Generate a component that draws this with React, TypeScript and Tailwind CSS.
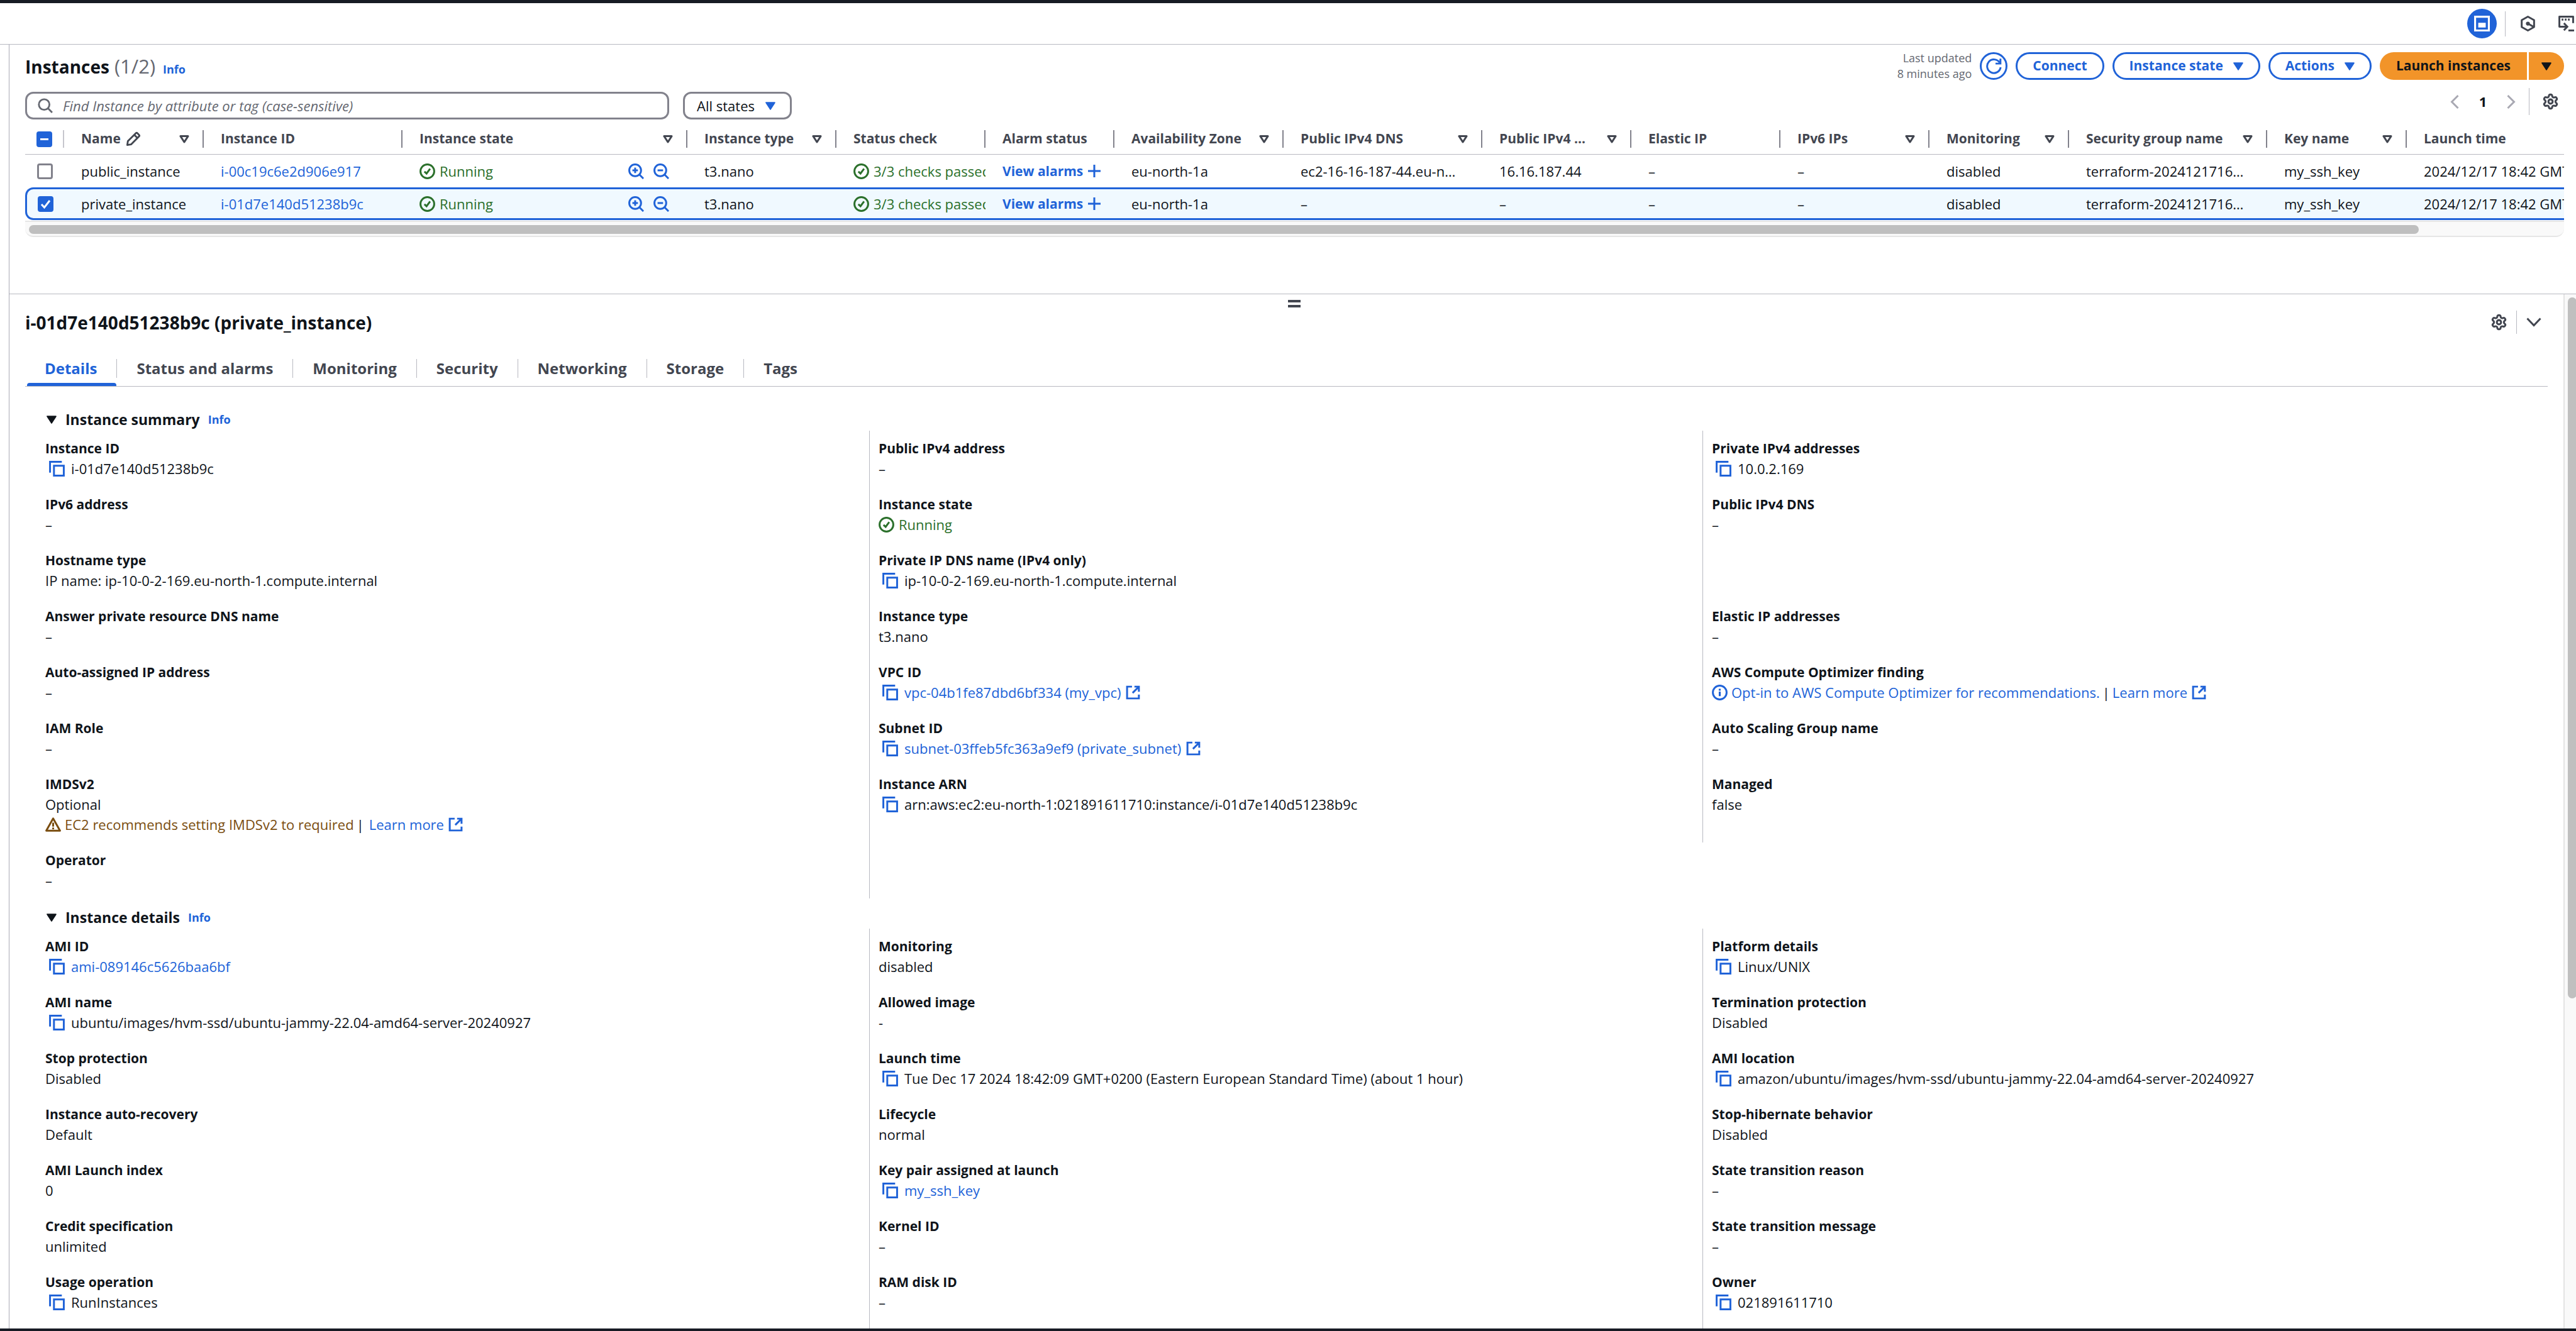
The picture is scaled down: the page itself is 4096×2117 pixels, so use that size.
import type { ReactNode } from "react";
import { Settings } from "lucide-react";

/* ---------- icons ---------- */

function Caret({ className = "" }: { className?: string }) {
  return (
    <svg viewBox="0 0 16 13" className={`h-[13px] w-4 shrink-0 ${className}`} aria-hidden="true">
      <path d="M1.2 1.2h13.6L8 11.8z" fill="currentColor" stroke="currentColor" strokeWidth="2" strokeLinejoin="round" />
    </svg>
  );
}

function FilterIcon() {
  return (
    <svg viewBox="0 0 16 13" className="h-[13px] w-4 shrink-0 text-[#424650]" fill="none" aria-hidden="true">
      <path d="M2 1.6h12L8 11z" stroke="currentColor" strokeWidth="3" strokeLinejoin="round" />
    </svg>
  );
}

function Icon({ children, className = "size-[25px]" }: { children: ReactNode; className?: string }) {
  return (
    <svg
      viewBox="0 0 16 16"
      fill="none"
      stroke="currentColor"
      strokeWidth="1.9"
      className={`shrink-0 ${className}`}
      aria-hidden="true"
    >
      {children}
    </svg>
  );
}

const CheckCircle = () => (
  <Icon>
    <circle cx="8" cy="8" r="7" />
    <path d="M5 8.2l2.2 2L10.8 5.4" />
  </Icon>
);

const InfoCircle = () => (
  <Icon>
    <circle cx="8" cy="8" r="7" />
    <path d="M8 7v4.6M8 4.2v1.9" strokeWidth="2" />
  </Icon>
);

const Warning = () => (
  <Icon>
    <path d="M8 1.8L15 14.2H1z" strokeLinejoin="round" />
    <path d="M8 6v4M8 11v1.8" />
  </Icon>
);

const CopyIcon = () => (
  <Icon>
    <path d="M13 1H1v11" />
    <path d="M5 5h10v10H5z" />
  </Icon>
);

const External = () => (
  <Icon>
    <path d="M7 2H2v12h12V10" />
    <path d="M9.5 2H14v5.2M13.8 2.2L7.6 8.4" />
  </Icon>
);

const SearchIcon = () => (
  <Icon className="size-6">
    <circle cx="6.8" cy="6.8" r="5.6" />
    <path d="M11 11l4.3 4.3" />
  </Icon>
);

const ZoomIcon = ({ plus }: { plus?: boolean }) => (
  <Icon>
    <circle cx="7" cy="7" r="6" />
    <path d="M11.4 11.4l4 4" />
    <path d="M4.2 7h5.6" />
    {plus && <path d="M7 4.2v5.6" />}
  </Icon>
);

const PlusIcon = () => (
  <Icon className="size-5">
    <path d="M8 0v16M0 8h16" strokeWidth="2.4" />
  </Icon>
);

const Pencil = () => (
  <Icon className="size-6">
    <path
      d="M1.6 14.4l.6-4L10.6 2a1.3 1.3 0 0 1 1.8 0L14 3.6a1.3 1.3 0 0 1 0 1.8L5.6 13.8zM9 3.6L12.4 7"
      strokeLinejoin="round"
    />
  </Icon>
);

const Refresh = () => (
  <Icon>
    <path d="M14.8 9A6.9 6.9 0 1 1 13.8 4.2" />
    <path d="M14.6 .2V5.2H9.6" />
  </Icon>
);

const SplitPanelIcon = () => (
  <Icon>
    <path d="M1 1h14v14H1z" strokeWidth="2" />
    <path d="M4.2 7.2h7.6v4.8H4.2z" fill="currentColor" stroke="none" />
  </Icon>
);

const HexagonIcon = () => (
  <Icon>
    <path d="M8 1l6.3 3.5v7L8 15l-6.3-3.5v-7z" strokeLinejoin="round" />
    <circle cx="8" cy="8" r="2" fill="currentColor" stroke="none" />
    <path d="M8 8l5.8 3.3" />
  </Icon>
);

const ShellIcon = () => (
  <Icon>
    <path d="M4.5 11.2H1V1h14v6.5" strokeLinejoin="round" />
    <path d="M3.3 3.9h1.8M6.5 3.9h1.8M9.7 3.9h1.8" strokeWidth="2" />
    <path d="M4 11.2h4.8M5.6 7.6l3.5 3.6-3.5 3.6" />
    <path d="M10.2 15h5.8" />
  </Icon>
);

const Gear = () => <Settings className="size-[27px] text-[#424650]" strokeWidth={2.7} aria-hidden="true" />;

/* ---------- small parts ---------- */

const Link = ({ children }: { children: ReactNode }) => (
  <a href="#" className="text-[#2063d8]">
    {children}
  </a>
);

const InfoLink = () => (
  <a href="#" className="text-[18px] font-bold text-[#2063d8]">
    Info
  </a>
);

const Running = () => (
  <span className="flex items-center gap-[7px] text-[#2b702b]">
    <CheckCircle />
    Running
  </span>
);

function Copyable({ children, external }: { children: ReactNode; external?: boolean }) {
  return (
    <span className="flex items-center pl-[6px]">
      <button type="button" aria-label="Copy" className="mr-[10px] text-[#2063d8]">
        <CopyIcon />
      </button>
      {children}
      {external && (
        <span className="ml-[7px] text-[#2063d8]">
          <External />
        </span>
      )}
    </span>
  );
}

function OutlineButton({ children, menu }: { children: ReactNode; menu?: boolean }) {
  return (
    <button
      type="button"
      className="flex h-[44px] items-center gap-4 rounded-full border-[3px] border-[#2063d8] px-6 text-[21px] font-bold text-[#2063d8]"
    >
      {children}
      {menu && <Caret />}
    </button>
  );
}

/* ---------- instances table ---------- */

type Column = { title: string; width: string; filter?: boolean; edit?: boolean };

const columns: Column[] = [
  { title: "Name", width: "w-[222px]", filter: true, edit: true },
  { title: "Instance ID", width: "w-[316px]" },
  { title: "Instance state", width: "w-[453px]", filter: true },
  { title: "Instance type", width: "w-[237px]", filter: true },
  { title: "Status check", width: "w-[237px]" },
  { title: "Alarm status", width: "w-[205px]" },
  { title: "Availability Zone", width: "w-[269px]", filter: true },
  { title: "Public IPv4 DNS", width: "w-[316px]", filter: true },
  { title: "Public IPv4 …", width: "w-[237px]", filter: true },
  { title: "Elastic IP", width: "w-[237px]" },
  { title: "IPv6 IPs", width: "w-[237px]", filter: true },
  { title: "Monitoring", width: "w-[222px]", filter: true },
  { title: "Security group name", width: "w-[315px]", filter: true },
  { title: "Key name", width: "w-[222px]", filter: true },
  { title: "Launch time", width: "w-[316px]" },
];

const instances = [
  { name: "public_instance", id: "i-00c19c6e2d906e917", dns: "ec2-16-16-187-44.eu-n…", ip: "16.16.187.44", selected: false },
  { name: "private_instance", id: "i-01d7e140d51238b9c", dns: "–", ip: "–", selected: true },
];

function RowCheckbox({ label, checked }: { label: string; checked: boolean }) {
  return (
    <span className="relative mx-auto block size-[25px]">
      <input
        type="checkbox"
        aria-label={label}
        defaultChecked={checked}
        className="block size-[25px] appearance-none rounded-[4px] border-[3px] border-[#82828c] bg-white checked:border-[#2063d8] checked:bg-[#2063d8]"
      />
      {checked && (
        <svg viewBox="0 0 25 25" className="pointer-events-none absolute inset-0 size-[25px]" fill="none" aria-hidden="true">
          <path d="M6 13l4.5 5L19 7" stroke="white" strokeWidth="3" />
        </svg>
      )}
    </span>
  );
}

function InstancesTable() {
  return (
    <div className="mt-[7px] overflow-hidden">
      <table className="w-[4103px] table-fixed border-separate border-spacing-0 text-left">
        <colgroup>
          <col className="w-[62px]" />
          {columns.map((c) => (
            <col key={c.title} className={c.width} />
          ))}
        </colgroup>
        <thead>
          <tr className="h-[49px]">
            <th className="border-b border-[#b8b9c1] p-0">
              <div className="flex h-7 items-center border-r-2 border-[#c6c6cd]">
                <span className="relative mx-auto block size-[25px]">
                  <input
                    type="checkbox"
                    aria-label="Select all instances"
                    className="block size-[25px] appearance-none rounded-[4px] bg-[#2063d8]"
                  />
                  <span className="pointer-events-none absolute top-[11px] left-[6px] h-[3px] w-[13px] bg-white" />
                </span>
              </div>
            </th>
            {columns.map((c, i) => (
              <th key={c.title} className="border-b border-[#b8b9c1] p-0">
                <div
                  className={`flex h-7 items-center justify-between pr-[21px] pl-[27px] text-[21px] font-bold text-[#424650] ${
                    i < columns.length - 1 ? "border-r-2 border-[#82828c]" : ""
                  }`}
                >
                  <span className="flex items-center gap-2 whitespace-nowrap">
                    {c.title}
                    {c.edit && <Pencil />}
                  </span>
                  {c.filter && <FilterIcon />}
                </div>
              </th>
            ))}
          </tr>
        </thead>
        <tbody>
          {instances.map((r) => {
            const edge = r.selected ? "border-y-[3px] border-[#2063d8] bg-[#f0f9ff]" : "";
            const cell = `overflow-hidden whitespace-nowrap p-0 pl-[27px] ${edge}`;
            return (
              <tr key={r.id} className="h-[52px] text-[22px]">
                <td className={`p-0 ${edge} ${r.selected ? "rounded-l-[13px] border-l-[3px]" : ""}`}>
                  <RowCheckbox label={`Select ${r.name}`} checked={r.selected} />
                </td>
                <td className={cell}>{r.name}</td>
                <td className={cell}>
                  <Link>{r.id}</Link>
                </td>
                <td className={cell}>
                  <div className="flex items-center justify-between pr-[29px]">
                    <Running />
                    <span className="flex gap-[15px] text-[#2063d8]">
                      <button type="button" aria-label="Filter by this value">
                        <ZoomIcon plus />
                      </button>
                      <button type="button" aria-label="Exclude this value">
                        <ZoomIcon />
                      </button>
                    </span>
                  </div>
                </td>
                <td className={cell}>t3.nano</td>
                <td className={cell}>
                  <span className="flex items-center gap-[7px] text-[#2b702b]">
                    <CheckCircle />
                    3/3 checks passed
                  </span>
                </td>
                <td className={cell}>
                  <a href="#" className="flex items-center gap-2 text-[21px] leading-[33px] font-bold text-[#2063d8]">
                    View alarms
                    <PlusIcon />
                  </a>
                </td>
                <td className={cell}>eu-north-1a</td>
                <td className={cell}>{r.dns}</td>
                <td className={cell}>{r.ip}</td>
                <td className={cell}>–</td>
                <td className={cell}>–</td>
                <td className={cell}>disabled</td>
                <td className={cell}>terraform-2024121716…</td>
                <td className={cell}>my_ssh_key</td>
                <td className={cell}>2024/12/17 18:42 GMT+2</td>
              </tr>
            );
          })}
        </tbody>
      </table>
      <div className="mt-px h-[26px] rounded-b-[13px] border-y-2 border-[#e6e6e6] bg-[#f9f9f9] px-[6px] pt-[5px]">
        <div className="h-[14px] w-[94.4%] rounded-full bg-[#bfbfbf]" />
      </div>
    </div>
  );
}

/* ---------- detail panel ---------- */

type Field = { label: string; value: ReactNode } | null;

const dash = "–";

const summary: Field[] = [
  { label: "Instance ID", value: <Copyable>i-01d7e140d51238b9c</Copyable> },
  { label: "Public IPv4 address", value: dash },
  { label: "Private IPv4 addresses", value: <Copyable>10.0.2.169</Copyable> },
  { label: "IPv6 address", value: dash },
  { label: "Instance state", value: <Running /> },
  { label: "Public IPv4 DNS", value: dash },
  { label: "Hostname type", value: "IP name: ip-10-0-2-169.eu-north-1.compute.internal" },
  { label: "Private IP DNS name (IPv4 only)", value: <Copyable>ip-10-0-2-169.eu-north-1.compute.internal</Copyable> },
  null,
  { label: "Answer private resource DNS name", value: dash },
  { label: "Instance type", value: "t3.nano" },
  { label: "Elastic IP addresses", value: dash },
  { label: "Auto-assigned IP address", value: dash },
  {
    label: "VPC ID",
    value: (
      <Copyable external>
        <Link>vpc-04b1fe87dbd6bf334 (my_vpc)</Link>
      </Copyable>
    ),
  },
  {
    label: "AWS Compute Optimizer finding",
    value: (
      <span className="flex items-center text-[#2063d8]">
        <InfoCircle />
        <a href="#" className="ml-[6px]">
          Opt-in to AWS Compute Optimizer for recommendations.
        </a>
        <span className="mx-1 text-[#0f141a]">|</span>
        <a href="#" className="flex items-center gap-[6px]">
          Learn more
          <External />
        </a>
      </span>
    ),
  },
  { label: "IAM Role", value: dash },
  {
    label: "Subnet ID",
    value: (
      <Copyable external>
        <Link>subnet-03ffeb5fc363a9ef9 (private_subnet)</Link>
      </Copyable>
    ),
  },
  { label: "Auto Scaling Group name", value: dash },
  {
    label: "IMDSv2",
    value: (
      <>
        Optional
        <span className="flex items-center text-[#7a4d10]">
          <Warning />
          <span className="ml-[6px]">EC2 recommends setting IMDSv2 to required</span>
          <span className="mr-2 ml-1 text-[#0f141a]">|</span>
          <a href="#" className="flex items-center gap-[6px] text-[#2063d8]">
            Learn more
            <External />
          </a>
        </span>
      </>
    ),
  },
  { label: "Instance ARN", value: <Copyable>arn:aws:ec2:eu-north-1:021891611710:instance/i-01d7e140d51238b9c</Copyable> },
  { label: "Managed", value: "false" },
  { label: "Operator", value: dash },
];

const details: Field[] = [
  {
    label: "AMI ID",
    value: (
      <Copyable>
        <Link>ami-089146c5626baa6bf</Link>
      </Copyable>
    ),
  },
  { label: "Monitoring", value: "disabled" },
  { label: "Platform details", value: <Copyable>Linux/UNIX</Copyable> },
  { label: "AMI name", value: <Copyable>ubuntu/images/hvm-ssd/ubuntu-jammy-22.04-amd64-server-20240927</Copyable> },
  { label: "Allowed image", value: "-" },
  { label: "Termination protection", value: "Disabled" },
  { label: "Stop protection", value: "Disabled" },
  {
    label: "Launch time",
    value: <Copyable>Tue Dec 17 2024 18:42:09 GMT+0200 (Eastern European Standard Time) (about 1 hour)</Copyable>,
  },
  { label: "AMI location", value: <Copyable>amazon/ubuntu/images/hvm-ssd/ubuntu-jammy-22.04-amd64-server-20240927</Copyable> },
  { label: "Instance auto-recovery", value: "Default" },
  { label: "Lifecycle", value: "normal" },
  { label: "Stop-hibernate behavior", value: "Disabled" },
  { label: "AMI Launch index", value: "0" },
  {
    label: "Key pair assigned at launch",
    value: (
      <Copyable>
        <Link>my_ssh_key</Link>
      </Copyable>
    ),
  },
  { label: "State transition reason", value: dash },
  { label: "Credit specification", value: "unlimited" },
  { label: "Kernel ID", value: dash },
  { label: "State transition message", value: dash },
  { label: "Usage operation", value: <Copyable>RunInstances</Copyable> },
  { label: "RAM disk ID", value: dash },
  { label: "Owner", value: <Copyable>021891611710</Copyable> },
  null,
  null,
  null,
];

function Section({ title, fields, first }: { title: string; fields: Field[]; first?: boolean }) {
  return (
    <section className={`px-[18px] ${first ? "pt-[34px]" : "pt-3"}`}>
      <div className="flex h-9 items-center pl-4">
        <h3 className="flex items-baseline gap-[13px]">
          <button type="button" className="flex items-center gap-[14px] text-[23px] font-bold">
            <Caret />
            {title}
          </button>
          <InfoLink />
        </h3>
      </div>
      <dl className="grid grid-cols-3 text-[22px] leading-8">
        {fields.map((f, i) => (
          <div
            key={i}
            className={`pt-3 pb-[13px] pl-[14px] whitespace-nowrap ${i % 3 < 2 ? "border-r border-[#b8b9c1]" : ""}`}
          >
            {f && (
              <>
                <dt className="text-[21px] font-bold">{f.label}</dt>
                <dd>{f.value}</dd>
              </>
            )}
          </div>
        ))}
      </dl>
    </section>
  );
}

const tabs = ["Details", "Status and alarms", "Monitoring", "Security", "Networking", "Storage", "Tags"];

export default function App() {
  return (
    <div className="flex h-screen flex-col overflow-hidden border-t-[5px] border-b-4 border-[#171b24] bg-white font-['Open_Sans','Noto_Sans',sans-serif] text-[#0f141a]">
      <header className="flex h-[66px] shrink-0 items-center justify-end border-b border-[#b8b9c1] pr-[3px]">
        <button
          type="button"
          aria-label="Split panel"
          className="flex size-[47px] items-center justify-center rounded-full bg-[#2063d8] text-white"
        >
          <SplitPanelIcon />
        </button>
        <span className="ml-[13px] h-10 w-px bg-[#b8b9c1]" />
        <button type="button" aria-label="Amazon Q" className="ml-[23px] text-[#424650]">
          <HexagonIcon />
        </button>
        <button type="button" aria-label="CloudShell" className="ml-[36px] text-[#424650]">
          <ShellIcon />
        </button>
      </header>

      <main className="ml-[14px] flex min-h-0 flex-1 flex-col border-l border-[#a9a9b5]">
        <section className="shrink-0 pt-3 pr-[19px] pb-[90px] pl-[25px]">
          <div className="flex h-[44px] items-center justify-between">
            <h1 className="flex items-baseline text-[28px] font-bold">
              Instances
              <span className="mr-3 ml-2 text-[31px] font-normal text-[#656871]">(1/2)</span>
              <InfoLink />
            </h1>
            <div className="flex items-center gap-[13px]">
              <p className="text-right text-[18px] leading-[25px] text-[#656871]">
                Last updated
                <br />8 minutes ago
              </p>
              <button
                type="button"
                aria-label="Refresh"
                className="flex size-[44px] items-center justify-center rounded-full border-[3px] border-[#2063d8] text-[#2063d8]"
              >
                <Refresh />
              </button>
              <OutlineButton>Connect</OutlineButton>
              <OutlineButton menu>Instance state</OutlineButton>
              <OutlineButton menu>Actions</OutlineButton>
              <div className="flex h-[44px] gap-[3px] text-[21px] font-bold">
                <button type="button" className="rounded-l-full bg-[#f29429] px-[26px]">
                  Launch instances
                </button>
                <button
                  type="button"
                  aria-label="More launch options"
                  className="flex w-[56px] items-center justify-center rounded-r-full bg-[#f29429]"
                >
                  <Caret />
                </button>
              </div>
            </div>
          </div>

          <div className="mt-[13px] flex items-start justify-between">
            <div className="mt-[6px] flex gap-[22px]">
              <label className="flex h-[44px] w-[1024px] items-center gap-4 rounded-[13px] border-[3px] border-[#82828c] pl-[17px] text-[#656871]">
                <SearchIcon />
                <input
                  type="search"
                  aria-label="Find instances"
                  placeholder="Find Instance by attribute or tag (case-sensitive)"
                  className="flex-1 text-[22px] outline-none placeholder:text-[#656871] placeholder:italic"
                />
              </label>
              <div className="relative">
                <select
                  aria-label="Instance state filter"
                  className="h-[44px] w-[173px] appearance-none rounded-[13px] border-[3px] border-[#82828c] pl-[19px] text-[22px]"
                >
                  <option>All states</option>
                </select>
                <Caret className="pointer-events-none absolute top-4 right-[26px] text-[#2063d8]" />
              </div>
            </div>
            <div className="flex h-[43px] items-center pr-2">
              <button type="button" aria-label="Previous page" className="text-[#a9a9b3]">
                <svg viewBox="0 0 14 22" className="h-[22px] w-[14px]" fill="none" stroke="currentColor" strokeWidth="3" aria-hidden="true">
                  <path d="M12.5 1L2.5 11l10 10" />
                </svg>
              </button>
              <span className="w-[76px] text-center text-[22px] font-bold">1</span>
              <button type="button" aria-label="Next page" className="text-[#a9a9b3]">
                <svg viewBox="0 0 14 22" className="h-[22px] w-[14px]" fill="none" stroke="currentColor" strokeWidth="3" aria-hidden="true">
                  <path d="M1.5 1l10 10-10 10" />
                </svg>
              </button>
              <span className="mr-5 ml-[21px] h-[43px] w-px bg-[#b8b9c1]" />
              <button type="button" aria-label="Preferences">
                <Gear />
              </button>
            </div>
          </div>

          <InstancesTable />
        </section>

        <section className="flex min-h-0 flex-1 border-t border-[#b8b9c1]">
          <div className="min-w-0 flex-1 overflow-hidden px-[25px]">
            <div className="flex h-[21px] flex-col items-center gap-1 pt-[9px] pl-6">
              <span className="h-1 w-5 bg-[#424650]" />
              <span className="h-1 w-5 bg-[#424650]" />
            </div>
            <div className="flex h-[47px] items-center justify-between">
              <h2 className="text-[28px] font-bold">i-01d7e140d51238b9c (private_instance)</h2>
              <div className="flex items-center pr-[10px]">
                <button type="button" aria-label="Panel preferences">
                  <Gear />
                </button>
                <span className="mr-[15px] ml-[14px] h-[37px] w-px bg-[#b8b9c1]" />
                <button type="button" aria-label="Close panel" className="text-[#424650]">
                  <svg viewBox="0 0 24 15" className="h-[15px] w-6" fill="none" stroke="currentColor" strokeWidth="3" aria-hidden="true">
                    <path d="M1.5 1.5L12 12.5l10.5-11" />
                  </svg>
                </button>
              </div>
            </div>
            <div
              role="tablist"
              className="mt-[21px] flex h-[58px] items-center border-b border-[#b8b9c1] text-[24px] font-bold text-[#424650]"
            >
              {tabs.map((t, i) => (
                <div key={t} className="flex h-full items-center">
                  <button
                    type="button"
                    role="tab"
                    aria-selected={i === 0}
                    className={`h-full px-[31px] ${i === 0 ? "relative text-[#2063d8]" : ""}`}
                  >
                    {t}
                    {i === 0 && (
                      <span className="absolute bottom-0 left-[3px] h-[5px] w-[calc(100%-3px)] rounded-t-[4px] bg-[#2063d8]" />
                    )}
                  </button>
                  {i < tabs.length - 1 && <span className="h-[30px] w-px bg-[#b8b9c1]" />}
                </div>
              ))}
            </div>
            <Section title="Instance summary" fields={summary} first />
            <Section title="Instance details" fields={details} />
          </div>
          <div className="w-5 shrink-0 overflow-hidden border-l-2 border-[#e4e4e4] bg-[#f9f9f9] pt-[5px] pl-[5px]">
            <div className="h-[68%] w-[14px] rounded-full bg-[#bfbfbf]" />
          </div>
        </section>
      </main>
    </div>
  );
}
